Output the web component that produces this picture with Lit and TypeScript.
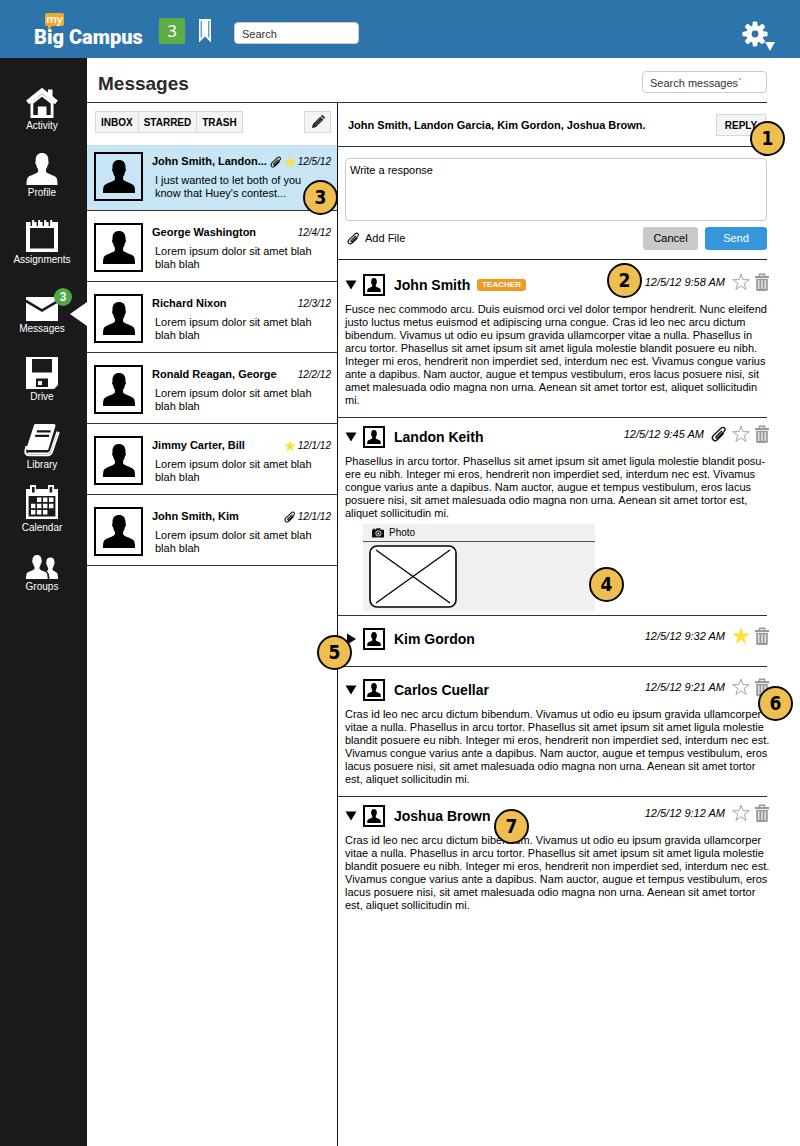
import { LitElement, html, svg, css, nothing } from "lit";
import { customElement, state } from "lit/decorators.js";
import { classMap } from "lit/directives/class-map.js";

interface Conversation {
  who: string;
  date: string;
  text: string;
  clip?: boolean;
  star?: boolean;
  active?: boolean;
  note?: number;
}

interface Message {
  who: string;
  date: string;
  body: string;
  open: boolean;
  space: "snug" | "normal" | "roomy";
  teacher?: boolean;
  clip?: boolean;
  star?: boolean;
  photo?: boolean;
}

const PERSON = "M16 0C12 0 9.6 2.6 9.5 6.6L9.5 8.6C8.7 9 9.1 12 10.2 12.4C10.5 14.4 11 15.6 11.9 16.6V19.4C10.5 21.6 3.8 22.8 1.4 25.2C.2 26.6 0 29.5 0 33H32C32 29.5 31.8 26.6 30.6 25.2C28.2 22.8 21.5 21.6 20.1 19.4V16.6C21 15.6 21.5 14.4 21.8 12.4C22.9 12 23.3 9 22.5 8.6L22.5 6.6C22.4 2.6 20 0 16 0Z";
const STAR = "M9 1L11 6.7H17.2L12.2 10.4L14.1 16.5L9 12.8L3.9 16.5L5.8 10.4L.8 6.7H7Z";

const person = (w: number, h: number) => html`<svg width=${w} height=${h} viewBox="0 0 32 33" fill="currentColor" aria-hidden="true"><path d=${PERSON} /></svg>`;

const clip = (size: number) => html`<svg width=${size} height=${size} viewBox="0 0 16 16" fill="none" stroke="#111" stroke-width="1.4" stroke-linecap="round" stroke-linejoin="round" aria-hidden="true">
  <path d="M10.6 5.2L5.2 10.4C4.2 11.5 5.5 12.7 6.6 11.7L13 5.6C15.6 3 12.7-.2 10 2.3L2.6 9.3C-.6 12.6 3.2 16.6 6.6 13.4L12.4 7.8" />
</svg>`;

const star = (size: number, on: boolean) => html`<svg width=${size} height=${size} viewBox="0 0 18 18" fill=${on ? "#fee033" : "#fff"} stroke=${on ? "#fee033" : "#a3a3a3"} stroke-width=${on ? ".4" : "1"} aria-hidden="true"><path d=${STAR} /></svg>`;

const trash = html`<svg width="14" height="18" viewBox="0 0 14 18" fill="none" aria-hidden="true">
  <path d="M4.5 3V1.2H9.5V3" stroke="#999" stroke-width="1.6" />
  <path d="M0 3H14V5.2H0Z" fill="#999" />
  <path d="M1.2 6H12.8V16.4Q12.8 18 11.2 18H2.8Q1.2 18 1.2 16.4Z" fill="#999" />
  <path d="M3.8 7.2V16M7 7.2V16M10.2 7.2V16" stroke="#fff" stroke-width="1.1" />
</svg>`;

const gear = html`<svg width="26" height="26" viewBox="-13 -13 26 26" aria-hidden="true">
  <g fill="#fff">
    ${[0, 45, 90, 135, 180, 225, 270, 315].map(
      (a) => svg`<path transform="rotate(${a})" d="M-2.9-7L-2.2-11.8Q-2-12.6-1.2-12.6H1.2Q2-12.6 2.2-11.8L2.9-7Z" />`
    )}
    <circle r="8.6" />
  </g>
  <circle r="3.4" fill="#2c74aa" />
</svg>`;

const pencil = html`<svg width="14" height="14" viewBox="0 0 14 14" aria-hidden="true">
  <path d="M1 13L2 9L9.3 1.7L12.3 4.7L5 12Z" fill="#111" />
  <path d="M10 1L11 .3Q11.5 0 12 .5L13.5 2Q14 2.5 13.6 3L13 4Z" fill="#111" />
  <path d="M3.5 9.3L9.4 3.4M4.8 10.6L10.7 4.7" stroke="#f4f4f4" stroke-width=".5" />
</svg>`;

const camera = html`<svg width="12" height="10" viewBox="0 0 12 10" aria-hidden="true">
  <path d="M0 1.8H1V.8H3.2V1.8H3.8L4.6.3H8.2L9 1.8H12V9.6H0Z" fill="#111" />
  <circle cx="6.4" cy="5.4" r="2.6" fill="none" stroke="#f0f0f0" stroke-width=".9" />
  <circle cx="6.4" cy="5.4" r="1" fill="#f0f0f0" />
</svg>`;

const NAV = [
  {
    label: "Activity",
    icon: html`<svg width="32" height="30" viewBox="0 0 32 30" aria-hidden="true">
      <path d="M22 1.5H26.5V10L22 6Z" fill="#fff" />
      <path d="M1.6 14.4L16 2.8L30.4 14.4" fill="none" stroke="#fff" stroke-width="4.6" />
      <path d="M4.5 14.5L16 6L27.5 14.5V30H4.5Z" fill="#fff" />
      <path d="M7.3 15.6L16 8.8L24.7 15.6V27H20.5V18.5H11.8V27H7.3Z" fill="#1a1a1a" />
    </svg>`,
  },
  { label: "Profile", icon: person(32, 32) },
  {
    label: "Assignments",
    icon: html`<svg width="32" height="32" viewBox="0 0 32 32" aria-hidden="true">
      <path d="M0 2H32V32H0Z" fill="#fff" />
      <path d="M4 8H28V28.5H4Z" fill="#1a1a1a" />
      <path d="M5.4 2V6M11.4 2V6M17.4 2V6M23.4 2V6" stroke="#1a1a1a" stroke-width="1.6" />
      <path d="M7.2 0V8M13.2 0V8M19.2 0V8M25.2 0V8" stroke="#fff" stroke-width="2" />
    </svg>`,
  },
  {
    label: "Messages",
    current: true,
    icon: html`<svg width="32" height="34" viewBox="0 0 32 34" aria-hidden="true">
      <path d="M0 10H32V12.5L16 22L0 12.5Z" fill="#fff" />
      <path d="M0 15.6L16 25L32 15.6V34H0Z" fill="#fff" />
    </svg>`,
  },
  {
    label: "Drive",
    icon: html`<svg width="32" height="33" viewBox="0 0 32 33" aria-hidden="true">
      <path d="M0 1H32V29L28 33H0Z" fill="#fff" />
      <path d="M6 3H26V16.5H6Z" fill="#1a1a1a" />
      <path d="M10 22.5H22V31H10Z" fill="#1a1a1a" />
      <path d="M12 25H16V29H12Z" fill="#fff" />
    </svg>`,
  },
  {
    label: "Library",
    icon: html`<svg width="36" height="33" viewBox="0 0 36 33" fill="none" aria-hidden="true">
      <path d="M11.5 1.5H30L23 24.5H4Z" fill="#fff" stroke="#fff" stroke-width="3" stroke-linejoin="round" />
      <path d="M2.6 22Q-1 31 5 31.3H24Q27 31 28 28L34.8 8" stroke="#fff" stroke-width="2" />
      <path d="M3.4 27.6H23.6L26 25.4L32 7" stroke="#1a1a1a" stroke-width="1.2" />
      <path d="M3.6 29.3H24.4L26.6 27L33.2 7.6" stroke="#fff" stroke-width="1.4" />
      <path d="M12.8 7.3H26.6M11.2 11.8H25" stroke="#1a1a1a" stroke-width="2.2" />
    </svg>`,
  },
  {
    label: "Calendar",
    tight: true,
    icon: html`<svg width="32" height="35" viewBox="0 0 32 35" aria-hidden="true">
      <path d="M0 4H32V34H0Z" fill="#fff" />
      <path d="M4 0H10V6H4ZM22 0H28V6H22Z" fill="#fff" />
      <path d="M6 2H8.6V7.5H6ZM23.6 2H26.2V7.5H23.6Z" fill="#1a1a1a" />
      <path d="M2.6 11H29.4V31.5H2.6Z" fill="#1a1a1a" />
      <path d="M11 12.6h4.4v4.4h-4.4zM17 12.6h4.4v4.4h-4.4zM23 12.6h4.4v4.4h-4.4zM5 18.8h4.4v4.4h-4.4zM11 18.8h4.4v4.4h-4.4zM17 18.8h4.4v4.4h-4.4zM23 18.8h4.4v4.4h-4.4zM5 25h4.4v4.4h-4.4zM11 25h4.4v4.4h-4.4zM17 25h4.4v4.4h-4.4z" fill="#fff" />
    </svg>`,
  },
  {
    label: "Groups",
    icon: html`<svg width="32" height="24" viewBox="0 0 32 24" fill="#fff" aria-hidden="true">
      <path d="M11 0C8 0 6.4 2 6.5 5C5.9 5.4 6.2 8 7.1 8.4C7.4 10 7.8 11 8.5 11.8V14C7.6 15.6 2.2 16.2.9 18.2C.1 19.5 0 22 0 24H21.6C21.6 22 21.6 19.6 20.8 18.2C19.6 16.2 14.4 15.6 13.5 14V11.8C14.2 11 14.6 10 14.9 8.4C15.8 8 16.1 5.4 15.5 5C15.6 2 14 0 11 0Z" />
      <path d="M24.4 2.6C21.6 2.6 20.2 4.6 20.4 7C20 7.4 20.2 9.6 21 9.9C21.2 11.4 21.6 12.2 22.2 13V15L20.5 16C22.6 17.4 23.4 19.6 23.4 24H32C32 22 32 19.6 31.2 18.2C30.2 16.6 27.4 16.4 26.6 15V13C27.2 12.2 27.6 11.4 27.8 9.9C28.6 9.6 28.8 7.4 28.4 7C28.6 4.6 27.2 2.6 24.4 2.6Z" />
    </svg>`,
  },
];

const LOREM = "Lorem ipsum dolor sit amet blah blah blah";

const CONVERSATIONS: Conversation[] = [
  { who: "John Smith, Landon...", date: "12/5/12", text: "I just wanted to let both of you know that Huey's contest...", clip: true, star: true, active: true, note: 3 },
  { who: "George Washington", date: "12/4/12", text: LOREM },
  { who: "Richard Nixon", date: "12/3/12", text: LOREM },
  { who: "Ronald Reagan, George", date: "12/2/12", text: LOREM },
  { who: "Jimmy Carter, Bill", date: "12/1/12", text: LOREM, star: true },
  { who: "John Smith, Kim", date: "12/1/12", text: LOREM, clip: true },
];

const CRAS =
  "Cras id leo nec arcu dictum bibendum. Vivamus ut odio eu ipsum gravida ullamcorper vitae a nulla. Phasellus in arcu tortor. Phasellus sit amet ipsum sit amet ligula molestie blandit posuere eu nibh. Integer mi eros, hendrerit non imperdiet sed, interdum nec est. Vivamus congue varius ante a dapibus. Nam auctor, augue et tempus vestibulum, eros lacus posuere nisi, sit amet malesuada odio magna non urna. Aenean sit amet tortor est, aliquet sollicitudin mi.";

@customElement("app-root")
export class AppRoot extends LitElement {
  @state() private messages: Message[] = [
    {
      who: "John Smith",
      date: "12/5/12 9:58 AM",
      teacher: true,
      open: true,
      space: "roomy",
      body: "Fusce nec commodo arcu. Duis euismod orci vel dolor tempor hendrerit. Nunc eleifend justo luctus metus euismod et adipiscing urna congue. " + CRAS,
    },
    {
      who: "Landon Keith",
      date: "12/5/12 9:45 AM",
      clip: true,
      photo: true,
      open: true,
      space: "snug",
      body: "Phasellus in arcu tortor. Phasellus sit amet ipsum sit amet ligula molestie blandit posu\u00adere eu nibh. Integer mi eros, hendrerit non imperdiet sed, interdum nec est. Vivamus congue varius ante a dapibus. Nam auctor, augue et tempus vestibulum, eros lacus posuere nisi, sit amet malesuada odio magna non urna. Aenean sit amet tortor est, aliquet sollicitudin mi.",
    },
    { who: "Kim Gordon", date: "12/5/12 9:32 AM", star: true, open: false, space: "normal", body: CRAS },
    { who: "Carlos Cuellar", date: "12/5/12 9:21 AM", open: true, space: "normal", body: CRAS },
    { who: "Joshua Brown", date: "12/5/12 9:12 AM", open: true, space: "snug", body: CRAS },
  ];

  static styles = css`
    :host {
      display: block;
      font: 11px/13px "Liberation Sans", Arial, sans-serif;
      color: #000;
      background: #fff;
    }
    *, *::before, *::after { box-sizing: border-box; }
    button, input, textarea { font: inherit; color: inherit; margin: 0; }
    button { cursor: pointer; padding: 0; border: 0; background: none; }
    a { color: inherit; text-decoration: none; }
    h1, h2, p, ul { margin: 0; padding: 0; }
    ul { list-style: none; }
    svg { display: block; flex: none; overflow: visible; }

    .page { display: flex; flex-direction: column; min-height: 100vh; }

    .top {
      display: flex;
      align-items: center;
      height: 58px;
      padding: 0 25px 0 34px;
      background: #2c74aa;
      color: #fff;
    }
    .logo {
      position: relative;
      width: 110px;
      padding-top: 16px;
      font: 900 20px/20px Roboto, sans-serif;
      white-space: nowrap;
    }
    .my {
      position: absolute;
      left: 11px;
      top: 2px;
      width: 19px;
      height: 13px;
      border-radius: 2px;
      background: #f0a92f;
      font: 600 11px/11px "Open Sans", sans-serif;
      text-align: center;
    }
    .my::after {
      content: "";
      position: absolute;
      left: 3px;
      top: 13px;
      border: 2px solid transparent;
      border-top-color: #f0a92f;
      border-left-color: #f0a92f;
    }
    .alerts {
      margin: 4px 14px 0 15px;
      width: 26px;
      height: 26px;
      background: #5fad46;
      font: 17px/26px "Noto Sans", sans-serif;
    }
    .mark { margin: 4px 23px 0 0; }
    .field {
      width: 125px;
      height: 22px;
      padding: 2px 7px 0;
      border: 1px solid #ccc;
      border-radius: 4px;
      background: #fff;
      outline: none;
      color: #333;
    }
    .field::placeholder, .reply-box::placeholder { color: inherit; opacity: 1; }
    .top .field { margin-top: 8px; }
    .settings { display: flex; align-items: flex-end; margin: 9px 0 0 auto; }
    .caret { margin: 0 0 -4px -3px; }

    .body { display: flex; flex: 1; }

    .nav {
      flex: none;
      width: 87px;
      padding: 30px 3px 0 0;
      background: #1a1a1a;
      color: #fff;
      font-size: 10px;
      line-height: 12px;
    }
    .nav ul { display: flex; flex-direction: column; gap: 21px; }
    .nav a { position: relative; display: flex; flex-direction: column; align-items: center; gap: 2px; }
    .nav .tight { margin-top: -7px; }
    .count {
      position: absolute;
      left: 54px;
      top: 1px;
      width: 18px;
      height: 18px;
      border-radius: 50%;
      background: #4fa844;
      font: bold 12px/18px "Liberation Sans", sans-serif;
      text-align: center;
    }
    .pointer {
      position: absolute;
      right: -3px;
      top: 15px;
      border: solid transparent;
      border-width: 12px 17px 12px 0;
      border-right-color: #fff;
    }

    .main { flex: 1; min-width: 0; display: flex; flex-direction: column; padding-right: 33px; }
    .title {
      display: flex;
      justify-content: space-between;
      align-items: center;
      height: 45px;
      padding: 3px 0 0 11px;
      border-bottom: 1px solid #333;
    }
    h1 { font-size: 19px; line-height: 22px; padding-top: 5px; color: #2b2b2b; }
    .columns { display: flex; flex: 1; }

    .list { flex: none; width: 251px; border-right: 1px solid #111; }
    .tools { display: flex; justify-content: space-between; height: 42px; padding: 8px 6px 0 8px; }
    .tabs { display: flex; }
    .btn {
      height: 22px;
      padding: 0 5px;
      border: 1px solid #d8d8d8;
      background: #f4f4f4;
      font-size: 10px;
      font-weight: bold;
    }
    .btn + .btn { border-left: 0; }
    .btn.pen { display: grid; place-items: center; width: 27px; }

    .talk {
      position: relative;
      display: flex;
      gap: 9px;
      height: 71px;
      padding: 12px 6px 0 7px;
      border-bottom: 1px solid #333;
    }
    .talk.active { height: 66px; padding-top: 7px; background: #c7e5f4; }
    .face {
      flex: none;
      display: grid;
      place-items: center;
      width: 49px;
      height: 49px;
      border: 2px solid #000;
    }
    .summary { flex: 1; min-width: 0; padding-top: 3px; }
    .line { display: flex; align-items: center; gap: 2px; height: 13px; white-space: nowrap; }
    .line b { flex: 1; }
    .line time { font: italic 10px/13px "Liberation Sans", sans-serif; }
    .summary p { margin: 6px 0 0 3px; max-width: 160px; }

    .thread { flex: 1; min-width: 0; }
    .people {
      position: relative;
      display: flex;
      justify-content: space-between;
      align-items: center;
      height: 44px;
      padding: 1px 1px 0 10px;
      border-bottom: 1px solid #333;
      font-weight: bold;
    }
    .people .btn { width: 50px; }
    .composer { padding: 11px 0 9px 7px; border-bottom: 1px solid #222; }
    .reply-box {
      display: block;
      width: 100%;
      height: 63px;
      padding: 5px 4px;
      border: 1px solid #ccc;
      border-radius: 4px;
      resize: none;
      outline: none;
    }
    .actions { display: flex; align-items: center; gap: 7px; padding-top: 6px; }
    .add { display: flex; align-items: center; gap: 5px; margin-right: auto; padding-left: 2px; }
    .cancel, .send { height: 23px; border-radius: 3px; }
    .cancel { width: 55px; background: #c9c9c9; }
    .send { width: 62px; background: #3697dc; color: #fff; }

    .message { position: relative; padding: 11px 0 10px 7px; border-bottom: 1px solid #333; }
    .message:last-child { border-bottom: 0; }
    .message.snug { padding-top: 7px; }
    .message.roomy { padding-top: 13px; }
    .message.photo { padding-bottom: 4px; }
    .message.closed { padding-bottom: 15px; }
    .head { display: flex; align-items: center; height: 24px; white-space: nowrap; }
    .toggle { display: grid; place-items: center; width: 12px; height: 12px; margin-right: 6px; }
    .small { width: 22px; height: 22px; }
    h2 { margin-left: 9px; font-size: 14px; line-height: 18px; }
    .tag {
      margin-left: 7px;
      padding: 0 5px;
      border-radius: 3px;
      background: #f09a26;
      color: #fff;
      font: bold 8px/12px "Liberation Sans", sans-serif;
    }
    .meta { display: flex; align-items: center; gap: 5px; margin: 0 -2px 6px auto; }
    .meta time { margin-right: 2px; font-style: italic; }
    .message > p { margin: 6px -4px 0 0; }
    .attachment { width: 232px; height: 87px; margin: 4px 0 0 18px; background: #f0f0f0; }
    .caption {
      display: flex;
      align-items: center;
      gap: 5px;
      height: 18px;
      padding-left: 9px;
      border-bottom: 1px solid #555;
      font-size: 10px;
    }
    .thumb { margin: 3px 0 0 6px; }

    .note {
      position: absolute;
      z-index: 1;
      width: 35px;
      height: 35px;
      border: 2px solid #0a0a0a;
      border-radius: 50%;
      background: #eebf50;
      font: bold 19px/30px "DejaVu Sans Condensed", "DejaVu Sans", sans-serif;
      text-align: center;
    }
    .n1 { right: -18px; top: 18px; }
    .n2 { right: 125px; top: 3px; }
    .n3 { right: -1px; top: 35px; }
    .n4 { left: 251px; top: 149px; }
    .n5 { left: -21px; top: 19px; }
    .n6 { right: -26px; top: 19px; }
    .n7 { left: 156px; top: 12px; }
  `;

  private toggle(i: number) {
    this.messages = this.messages.map((m, k) => (k === i ? { ...m, open: !m.open } : m));
  }

  private favour(i: number) {
    this.messages = this.messages.map((m, k) => (k === i ? { ...m, star: !m.star } : m));
  }

  private note(n: number) {
    return html`<span class="note n${n}">${n}</span>`;
  }

  private renderTop() {
    return html`<header class="top">
      <a class="logo" href="#"><span class="my">my</span>Big Campus</a>
      <button class="alerts" aria-label="3 alerts">3</button>
      <button class="mark" aria-label="Bookmarks">
        <svg width="12" height="24" viewBox="0 0 12 24" aria-hidden="true">
          <path d="M0 0H12V23.5L6 17.5L0 23.5Z" fill="#fff" />
          <path d="M2.2 2V18.6M9.8 2V18.6" stroke="#2c74aa" stroke-width="1" />
        </svg>
      </button>
      <input class="field" type="search" placeholder="Search" aria-label="Search" />
      <button class="settings" aria-label="Settings">
        ${gear}<svg class="caret" width="10" height="9" viewBox="0 0 10 9" aria-hidden="true"><path d="M0 0H10L5 9Z" fill="#fff" /></svg>
      </button>
    </header>`;
  }

  private renderNav() {
    return html`<nav class="nav">
      <ul>
        ${NAV.map(
          (n) => html`<li class=${classMap({ tight: !!n.tight })}>
            <a href="#">${n.icon}<span>${n.label}</span>${n.current ? html`<span class="count">3</span><i class="pointer"></i>` : nothing}</a>
          </li>`
        )}
      </ul>
    </nav>`;
  }

  private renderList() {
    return html`<section class="list">
      <div class="tools">
        <div class="tabs">
          <button class="btn">INBOX</button><button class="btn">STARRED</button><button class="btn">TRASH</button>
        </div>
        <button class="btn pen" aria-label="New message">${pencil}</button>
      </div>
      <ul>
        ${CONVERSATIONS.map(
          (c) => html`<li>
            <a href="#" class=${classMap({ talk: true, active: !!c.active })}>
              <span class="face">${person(32, 33)}</span>
              <div class="summary">
                <div class="line"><b>${c.who}</b>${c.clip ? clip(12) : nothing}${c.star ? star(12, true) : nothing}<time>${c.date}</time></div>
                <p>${c.text}</p>
              </div>
              ${c.note ? this.note(c.note) : nothing}
            </a>
          </li>`
        )}
      </ul>
    </section>`;
  }

  private renderMessage(m: Message, i: number) {
    const notes = [[2], [4], [5], [6], [7]][i];
    return html`<article class=${classMap({ message: true, [m.space]: true, photo: !!m.photo, closed: !m.open })}>
      <div class="head">
        <button class="toggle" aria-label=${m.open ? "Collapse" : "Expand"} @click=${() => this.toggle(i)}>
          <svg width="12" height="12" viewBox="0 0 12 12" aria-hidden="true"><path d=${m.open ? "M.5 1.5H11.5L6 10.5Z" : "M2 .5L11 6L2 11.5Z"} /></svg>
        </button>
        <span class="face small">${person(14, 14)}</span>
        <h2>${m.who}</h2>
        ${m.teacher ? html`<span class="tag">TEACHER</span>` : nothing}
        <div class="meta">
          <time>${m.date}</time>
          ${m.clip ? clip(16) : nothing}
          <button aria-label="Star" @click=${() => this.favour(i)}>${star(18, !!m.star)}</button>
          <button aria-label="Delete">${trash}</button>
        </div>
      </div>
      ${m.open ? html`<p>${m.body}</p>` : nothing}
      ${m.open && m.photo
        ? html`<div class="attachment">
            <div class="caption">${camera}<span>Photo</span></div>
            <svg class="thumb" width="88" height="63" viewBox="0 0 88 63" aria-hidden="true">
              <rect x="1" y="1" width="86" height="61" rx="7" fill="#fff" stroke="#000" stroke-width="1.6" />
              <path d="M7 5L81 58M81 5L7 58" stroke="#000" stroke-width="1.3" />
            </svg>
          </div>`
        : nothing}
      ${notes.map((n) => this.note(n))}
    </article>`;
  }

  render() {
    return html`<div class="page">
      ${this.renderTop()}
      <div class="body">
        ${this.renderNav()}
        <main class="main">
          <div class="title">
            <h1>Messages</h1>
            <input class="field" type="search" placeholder="Search messages\`" aria-label="Search messages" />
          </div>
          <div class="columns">
            ${this.renderList()}
            <section class="thread">
              <div class="people"><span>John Smith, Landon Garcia, Kim Gordon, Joshua Brown.</span><button class="btn">REPLY</button>${this.note(1)}</div>
              <form class="composer" @submit=${(e: Event) => e.preventDefault()}>
                <textarea class="reply-box" placeholder="Write a response" aria-label="Write a response"></textarea>
                <div class="actions">
                  <button type="button" class="add">${clip(13)}Add File</button>
                  <button type="button" class="cancel">Cancel</button>
                  <button class="send">Send</button>
                </div>
              </form>
              ${this.messages.map((m, i) => this.renderMessage(m, i))}
            </section>
          </div>
        </main>
      </div>
    </div>`;
  }
}
